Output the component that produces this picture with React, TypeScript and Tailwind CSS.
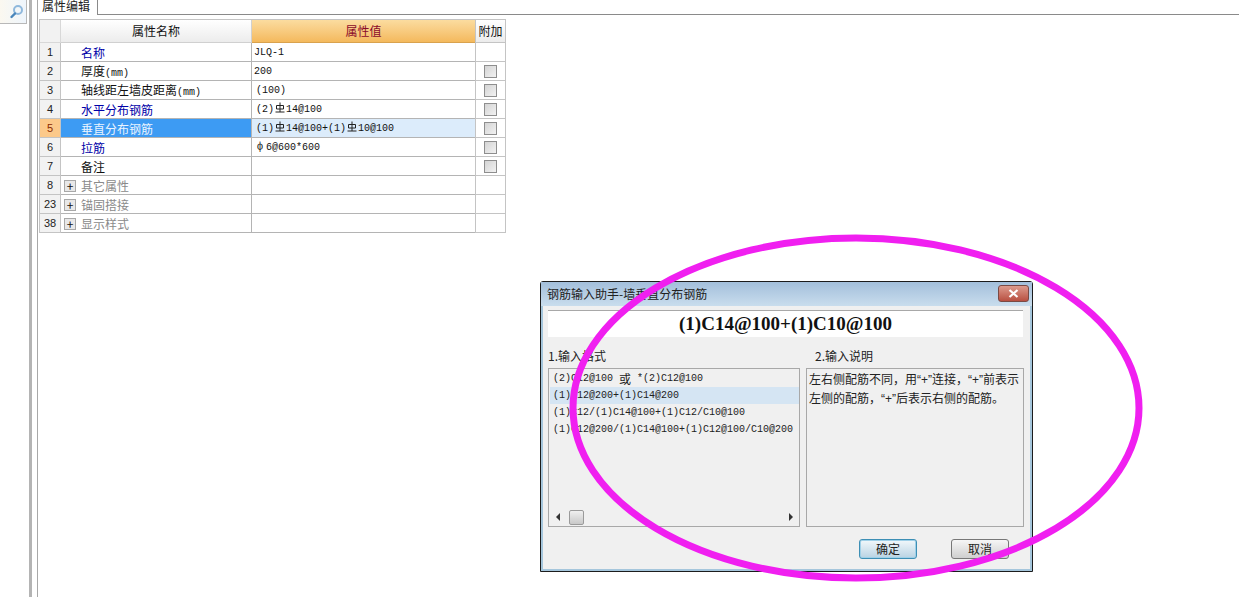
const cjk = "font-['Noto_Sans_CJK_SC','Liberation_Sans',sans-serif]";
const mono = "font-['Liberation_Mono',monospace]";
const latin = "font-['Liberation_Sans',sans-serif]";

function Rebar() {
  return (
    <svg width="10" height="11" viewBox="0 0 10 11" className="inline-block align-[-1px] mx-px">
      <path d="M5 .5V10M.5 10h9M1.5 3.5h7v3.5h-7z" fill="none" stroke="#222" strokeWidth="1" />
    </svg>
  );
}

const Mm = () => <span className={`${mono} text-[10px]`}>(mm)</span>;

const rows: { n: string; name: React.ReactNode; tone: string; value?: React.ReactNode; check?: boolean; plus?: boolean; active?: boolean }[] = [
  { n: "1", name: "名称", tone: "text-[#0000a8]", value: "JLQ-1" },
  { n: "2", name: <>厚度<Mm /></>, tone: "text-[#111]", value: "200", check: true },
  { n: "3", name: <>轴线距左墙皮距离<Mm /></>, tone: "text-[#111]", value: <span className="ml-[2px]">(100)</span>, check: true },
  { n: "4", name: "水平分布钢筋", tone: "text-[#0000a8]", value: <span className="ml-[2px]">(2)<Rebar />14@100</span>, check: true },
  { n: "5", name: "垂直分布钢筋", tone: "text-[#eaf4ff]", value: <span className="ml-[2px]">(1)<Rebar />14@100+(1)<Rebar />10@100</span>, check: true, active: true },
  { n: "6", name: "拉筋", tone: "text-[#0000a8]", value: <><span className="inline-block w-[12px] text-center">ф</span>6@600*600</>, check: true },
  { n: "7", name: "备注", tone: "text-[#111]", check: true },
  { n: "8", name: "其它属性", tone: "text-[#8a8a8a]", plus: true },
  { n: "23", name: "锚固搭接", tone: "text-[#8a8a8a]", plus: true },
  { n: "38", name: "显示样式", tone: "text-[#8a8a8a]", plus: true },
];

function PropertyTable() {
  return (
    <div className="w-[467px] border-t border-l border-[#c4c4c4] text-[12px] text-[#111]">
      <div className="flex h-[23px]">
        <div className="w-[21px] shrink-0 bg-[#f2f2f2] border-r border-b border-[#d8d8d8]" />
        <div className="w-[191px] shrink-0 flex items-center justify-center bg-gradient-to-b from-white to-[#ececec] border-r border-b border-[#d0d0d0]">属性名称</div>
        <div className="w-[223px] shrink-0 flex items-center justify-center bg-gradient-to-b from-[#fbdc9f] to-[#f4b95c] text-[#8a0a2a] border-b border-[#d9a24e]">属性值</div>
        <div className="w-[31px] shrink-0 flex items-center justify-center bg-gradient-to-b from-white to-[#ececec] border-l border-r border-b border-[#c4c4c4]">附加</div>
      </div>
      {rows.map((r) => (
        <div key={r.n} className="flex h-[19px] items-stretch">
          <div className={`w-[21px] shrink-0 flex items-center justify-center border-r border-b border-[#c4c4c4] ${latin} text-[11px] ${r.active ? "bg-[#fcc98a] text-[#8a2a00]" : "bg-[#f2f2f2] text-[#222]"}`}>{r.n}</div>
          <div className={`w-[191px] shrink-0 flex items-center pt-[1px] border-r border-b border-[#b4b4b4] ${r.active ? "bg-[#3d9bf3]" : "bg-white"} ${r.plus ? "pl-[3px]" : "pl-[20px]"}`}>
            {r.plus && (
              <span className="w-[12px] h-[12px] mr-[5px] flex items-center justify-center border border-[#a8a8a8] bg-[#e8e8e8] text-[#111] text-[12px] leading-none">+</span>
            )}
            <span className={r.tone}>{r.name}</span>
          </div>
          <div className={`w-[223px] shrink-0 flex items-center pl-[2px] border-b border-[#b4b4b4] ${mono} text-[10px] whitespace-pre ${r.active ? "bg-[#dcecfb]" : "bg-white"}`}>{r.value}</div>
          <div className="w-[31px] shrink-0 flex items-center justify-center bg-white border-l border-r border-b border-[#c4c4c4]">
            {r.check && <span className="w-[13px] h-[13px] border border-[#8e8e8e] bg-gradient-to-br from-[#d4d4d4] to-[#f2f2f2]" />}
          </div>
        </div>
      ))}
    </div>
  );
}

function Dialog() {
  return (
    <div className="absolute left-[540px] top-[281px] w-[493px] h-[291px] flex flex-col border border-[#1c1c1c] rounded-t-[3px] bg-[#a5c6dc] px-[2px] pb-[2px]">
      <div className="h-[24px] shrink-0 -mx-[2px] px-[6px] flex items-center justify-between bg-gradient-to-b from-[#a3bfdb] to-[#c9dded] text-[12px] text-[#222]">
        <span>钢筋输入助手-墙垂直分布钢筋</span>
        <button className="w-[31px] h-[17px] -mt-[1px] mr-[-3px] flex items-center justify-center rounded-[3px] border border-[#7a4a44] bg-gradient-to-b from-[#dc9a8d] to-[#b84f41]">
          <svg width="11" height="9" viewBox="0 0 11 9"><path d="M1.5 1l8 7M9.5 1l-8 7" stroke="#fff" strokeWidth="2.2" /></svg>
        </button>
      </div>
      <div className="flex-1 min-h-0 flex flex-col bg-[#f0f0f0] pt-[4px] pl-[5px]">
        <div className="h-[27px] w-[475px] flex items-center justify-center bg-white border-t border-[#a8a8a8] font-['Liberation_Serif',serif] font-bold text-[19px] text-[#111]">(1)C14@100+(1)C10@100</div>
        <div className="flex mt-[9px] h-[22px] pb-[2px] items-center text-[12px] text-[#222]">
          <span className="w-[267px]">1.输入格式</span>
          <span>2.输入说明</span>
        </div>
        <div className="flex gap-[6px] h-[159px]">
          <div className={`w-[252px] flex flex-col border border-[#a8a8a8] pl-[1px] pt-[1px] ${mono} text-[10px] text-[#222]`}>
            <div className="flex-1 min-h-0 whitespace-pre">
              <div className="h-[17px] flex items-center pl-[3px]">(2)C12@100 <span className={`${cjk} text-[12px]`}>或</span> *(2)C12@100</div>
              <div className="h-[17px] flex items-center pl-[3px] bg-[#d5e5f3]">(1)C12@200+(1)C14@200</div>
              <div className="h-[17px] flex items-center pl-[3px]">(1)C12/(1)C14@100+(1)C12/C10@100</div>
              <div className="h-[17px] flex items-center pl-[3px]">(1)C12@200/(1)C14@100+(1)C12@100/C10@200</div>
            </div>
            <div className="h-[18px] flex items-center justify-between bg-[#f0f0f0] px-[6px] text-[#333]">
              <div className="flex items-center gap-[9px]">
                <span className="w-0 h-0 border-y-[4px] border-y-transparent border-r-[4px] border-r-[#333]" />
                <span className="w-[15px] h-[15px] rounded-[2px] border border-[#9a9a9a] bg-gradient-to-b from-[#f0f0f0] to-[#c8c8c8]" />
              </div>
              <span className="w-0 h-0 border-y-[4px] border-y-transparent border-l-[4px] border-l-[#333]" />
            </div>
          </div>
          <div className="w-[218px] border border-[#a8a8a8] pl-[2px] pt-[1px] text-[12px] leading-[18px] text-[#222] whitespace-nowrap">
            左右侧配筋不同，用<span className={latin}>“+”</span>连接，<span className={latin}>“+”</span>前表示<br />左侧的配筋，<span className={latin}>“+”</span>后表示右侧的配筋。
          </div>
        </div>
        <div className="flex justify-end gap-[34px] mt-[12px] pr-[21px] text-[12px] text-[#222]">
          <button className="w-[58px] h-[20px] flex items-center justify-center rounded-[3px] border border-[#3d8fb5] shadow-[inset_0_0_0_1px_#9fd0e8] bg-gradient-to-b from-[#f2f8fb] to-[#b9d3e3]">确定</button>
          <button className="w-[58px] h-[20px] flex items-center justify-center rounded-[3px] border border-[#777] bg-gradient-to-b from-[#f6f6f6] to-[#cfcfcf]">取消</button>
        </div>
      </div>
    </div>
  );
}

export default function App() {
  return (
    <div className={`relative w-[1239px] h-[597px] overflow-hidden bg-white flex ${cjk}`}>
      <aside className="w-[29px] shrink-0">
        <div className="w-[27px] h-[24px] flex items-center justify-center pl-[6px] bg-gradient-to-r from-[#fbf8f0] to-[#eef5fc] border-r border-b border-[#b8b8b8]">
          <svg width="15" height="15" viewBox="0 0 15 15" fill="none">
            <circle cx="9" cy="6" r="4" stroke="#8fb8dc" strokeWidth="2" />
            <path d="M6 9.5L2.5 13" stroke="#4a86bb" strokeWidth="2.4" strokeLinecap="round" />
          </svg>
        </div>
      </aside>
      <div className="w-[3px] shrink-0 bg-[#b4b4b4]" />
      <div className="w-[5px] shrink-0" />
      <main className="flex-1 border-l border-[#a8a8a8]">
        <div className="h-[15px] border-b border-[#8a8a8a] flex">
          <div className="w-[60px] h-[15px] pl-[4px] border-r border-[#8a8a8a] bg-white text-[12px] leading-[11px] text-[#222]">属性编辑</div>
        </div>
        <div className="pt-[4px] pl-[1px]">
          <PropertyTable />
        </div>
      </main>
      <Dialog />
      <svg className="absolute inset-0 pointer-events-none" width="1239" height="597" viewBox="0 0 1239 597">
        <ellipse cx="856" cy="408" rx="283" ry="170" fill="none" stroke="#f01ff0" strokeWidth="7" />
      </svg>
    </div>
  );
}
